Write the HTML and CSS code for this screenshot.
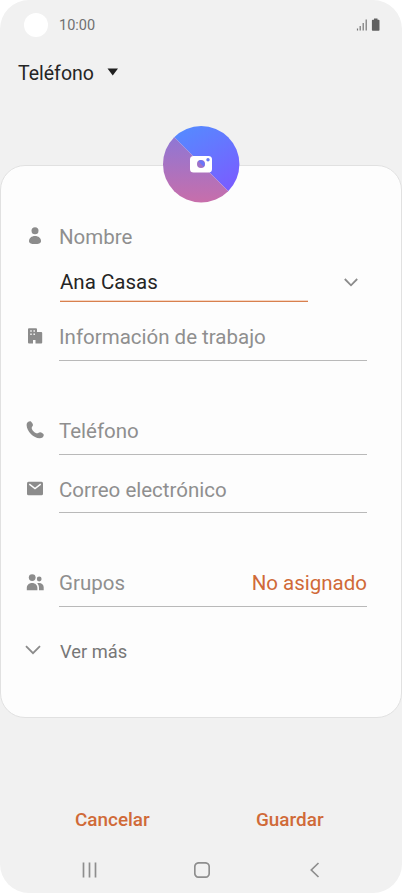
FILE: index.html
```html
<!DOCTYPE html>
<html lang="es">
<head>
<meta charset="utf-8">
<title>Contacto</title>
<link rel="stylesheet" href="styles.css">
</head>
<body>
<main class="phone">
  <header class="status">
    <span class="lens"></span>
    <span class="clock">10:00</span>
    <svg class="indicators" width="26" height="14" viewBox="0 0 26 14"><path d="M2.500 12.500v-2M5.200 12.500V8M8.200 12.500V5M11.200 12.500V1.500" stroke="#777" stroke-width="1.2"/><path d="M19 .5h3.500v1.200h1.200q.8 0 .8.8v9.400q0 .8-.8.8h-6q-.8 0-.8-.8V2.500q0-.8.8-.8H19z" fill="#606060"/></svg>
  </header>
  <div class="storage"><span>Teléfono</span><svg width="12" height="8" viewBox="0 0 12 8"><path d="M.5.5h10.500L5.750 7.500z" fill="#202020"/></svg></div>
  <section class="card">
    <svg class="avatar" width="77" height="77" viewBox="0 0 77 77">
      <defs>
        <linearGradient id="blue" x1="0" y1="0" x2=".6" y2="1"><stop offset="0" stop-color="#5091ff"/><stop offset="1" stop-color="#7a5cff"/></linearGradient>
        <linearGradient id="pink" x1="0" y1="0" x2="0" y2="1"><stop offset="0" stop-color="#8578dc"/><stop offset="1" stop-color="#c86eaa"/></linearGradient>
        <clipPath id="disc"><circle cx="38.200" cy="38.200" r="38.200"/></clipPath>
      </defs>
      <g clip-path="url(#disc)"><path d="M0 0h77v77z" fill="url(#blue)"/><path d="M0 0v77h77z" fill="url(#pink)"/></g>
      <rect x="27" y="30" width="22" height="16.500" rx="3.500" fill="#fff"/><circle cx="38" cy="38" r="4" fill="#a072c6"/><path d="M35.200 35.200a4 4 0 0 1 5.600 5.600z" fill="#6a74f8"/><circle cx="45" cy="33.800" r="1.700" fill="#6679f5"/>
    </svg>
    <div class="row name">
      <svg class="icon" width="18" height="18" viewBox="0 0 18 18"><circle cx="9" cy="3.800" r="3.500"/><path d="M3 14.200C3 11.200 5.500 9 9 9s6 2.200 6 5.200c0 2-2.500 2.800-6 2.800s-6-.8-6-2.800z"/></svg>
      <span>Nombre</span>
    </div>
    <div class="entry"><span class="value">Ana Casas</span><svg width="14" height="9" viewBox="0 0 14 9" class="chevron"><path d="M.8 1 7 7.300 13.200 1"/></svg></div>
    <div class="row lined work">
      <svg class="icon" width="18" height="18" viewBox="0 0 18 18"><path fill-rule="evenodd" d="M3 1.200h7q1 0 1 1V5h4.200q1 0 1 1v9.500q0 1-1 1H9.500V13H7v3.500H3q-1 0-1-1V2.200q0-1 1-1zM4.300 3.300v1.400h1.400V3.300zm3.200 0v1.400h1.400V3.300zM4.300 6.500v1.400h1.400V6.500zm3.200 0v1.400h1.400V6.500z"/></svg>
      <span>Información de trabajo</span>
    </div>
    <div class="row lined tel">
      <svg class="icon" width="18" height="18" viewBox="0 0 18 18"><path d="M.6 4C.5 1.800 2.200.2 4.300.2c1 0 2.700 2.600 2.700 3.800 0 1.300-1.500 1.800-1.300 3.200.4 2.300 3.100 4.800 5.400 5.100 1.200.1 1.700-1.100 3-1.100 1.400 0 3.700 1.700 3.700 2.700 0 2-2 3.300-4.100 3.300C7.500 17.200.8 10.500.6 4z"/></svg>
      <span>Teléfono</span>
    </div>
    <div class="row lined mail">
      <svg class="icon" width="18" height="18" viewBox="0 0 18 18"><rect x="1" y="1.800" width="16" height="13.400" rx="1.500"/><path d="m3.300 4.200 5.700 4.300 5.700-4.300" fill="none" stroke="#fdfdfd" stroke-width="1.500"/></svg>
      <span>Correo electrónico</span>
    </div>
    <div class="row lined groups">
      <svg class="icon" width="18" height="18" viewBox="0 0 18 18"><circle cx="6.200" cy="4.600" r="3.400"/><circle cx="13.200" cy="6" r="2.400"/><path d="M.8 17.200v-2c0-3 2-5.200 5.300-5.200s5.300 2.200 5.300 5.200v2zM13 17.200v-2.400c0-1.800-.7-3.500-1.800-4.600 3.500-1 6.500.8 6.500 4v3z"/></svg>
      <span>Grupos</span><span class="group">No asignado</span>
    </div>
    <div class="more"><svg width="16" height="10" viewBox="0 0 16 10" class="chevron"><path d="m1 1.200 7 7 7-7"/></svg><span>Ver más</span></div>
  </section>
  <div class="actions"><span class="cancel">Cancelar</span><span class="save">Guardar</span></div>
  <nav class="nav">
    <svg width="16" height="16" viewBox="0 0 16 16"><path d="M1.500.5v15M7.500.5v15M13.500.5v15"/></svg>
    <svg width="16" height="16" viewBox="0 0 16 16"><rect x=".8" y=".8" width="14.400" height="14.400" rx="4"/></svg>
    <svg width="16" height="16" viewBox="0 0 16 16"><path d="M12.500 1 5.300 8l7.200 7"/></svg>
  </nav>
</main>
</body>
</html>
```
FILE: styles.css
```css
* { box-sizing: border-box; }
body { margin: 0; background: #fff; font-family: Roboto, sans-serif; }
.phone { width: 402px; height: 893px; background: #f1f1f1; border-radius: 29px; overflow: hidden; display: flex; flex-direction: column; }
.status { height: 50px; flex: none; display: flex; align-items: center; padding: 0 21px 0 24px; }
.lens { width: 24px; height: 24px; border-radius: 50%; background: #fff; }
.clock { margin-left: 11px; font-size: 14.500px; color: #707070; }
.indicators { margin-left: auto; }
.storage { height: 46px; display: flex; align-items: center; gap: 13px; padding-left: 18px; font-size: 19.500px; color: #252525; }
.storage svg { margin-top: -3px; }
.card { position: relative; height: 553px; margin-top: 69px; flex: none; padding: 49px 34px 0 25px; background: #fdfdfd; border: 1px solid #e1e1e1; border-radius: 25px; }
.avatar { position: absolute; left: 162px; top: -40px; }
.row { display: flex; align-items: center; font-size: 20.500px; color: #8f8f8f; position: relative; }
.icon { width: 18px; height: 18px; fill: #8c8c8c; flex: none; margin: 0 15px 0 0; }
.row .icon { transform: translateY(-1px); }
.name { height: 44px; }
.entry { height: 43px; margin-left: 34px; display: flex; justify-content: space-between; padding-right: 9px; }
.value { width: 248px; font-size: 20.500px; line-height: 46px; color: #252525; background: linear-gradient(#f6d6c4 50%, #d8804e 50%) bottom / 100% 2px no-repeat; }
.chevron { fill: none; stroke: #8b8b8b; stroke-width: 1.800; }
.entry .chevron { margin-top: 19px; }
.lined { background: linear-gradient(#b9b9b9, #b9b9b9) right bottom / 308px 1px no-repeat; padding-bottom: 1px; }
.work { height: 59px; padding-top: 13px; }
.work, .tel, .mail, .groups { align-items: flex-start; line-height: 44px; }
.work .icon, .tel .icon, .mail .icon, .groups .icon { margin-top: 13px; }
.tel { height: 60px; margin-top: 34px; padding-top: 14px; }
.mail { height: 58px; padding-top: 13px; }
.groups { height: 60px; margin-top: 34px; padding-top: 14px; }
.group { margin-left: auto; color: #d06a38; }
.more { height: 44px; margin-top: 22px; display: flex; align-items: center; gap: 19px; margin-left: -1px; font-size: 18.300px; color: #777; }
.more .chevron { margin-top: -2px; }
.actions { display: grid; grid-template-columns: 181px auto; margin-top: 79px; padding-left: 75px; font-size: 18.900px; line-height: 46px; font-weight: 500; color: #d06a38; }
.nav { display: flex; justify-content: space-between; margin: 19px 80px 0 82px; }
.nav svg { fill: none; stroke: #8e8e8e; stroke-width: 1.700; }
```
